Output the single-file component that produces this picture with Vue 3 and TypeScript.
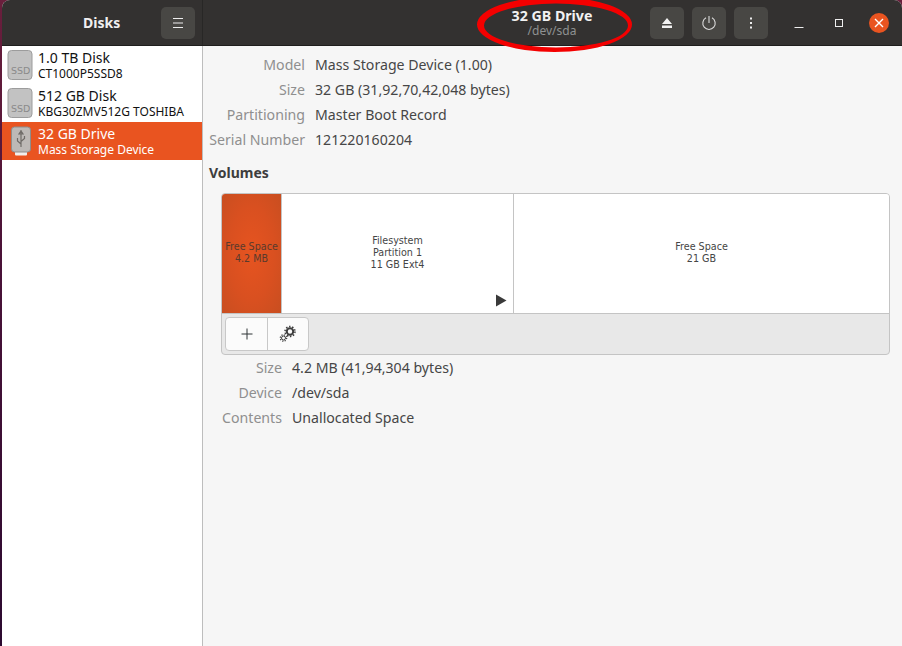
<script setup lang="ts">
const drives = [
  { title: '1.0 TB Disk', sub: 'CT1000P5SSD8', usb: false, active: false },
  { title: '512 GB Disk', sub: 'KBG30ZMV512G TOSHIBA', usb: false, active: false },
  { title: '32 GB Drive', sub: 'Mass Storage Device', usb: true, active: true },
]
const info = [
  ['Model', 'Mass Storage Device (1.00)'],
  ['Size', '32 GB (31,92,70,42,048 bytes)'],
  ['Partitioning', 'Master Boot Record'],
  ['Serial Number', '121220160204'],
]
const volInfo = [
  ['Size', '4.2 MB (41,94,304 bytes)'],
  ['Device', '/dev/sda'],
  ['Contents', 'Unallocated Space'],
]
</script>

<template>
  <div class="desk">
    <div class="win">
      <header class="bar">
        <div class="bar-left">
          <span class="app-title">Disks</span>
          <button class="hb menu-btn">
            <svg width="16" height="16" viewBox="0 0 16 16"><path d="M3 3.500h10M3 8h10M3 12.500h10" stroke="#eee" stroke-width="1" fill="none" /></svg>
          </button>
        </div>
        <div class="bar-right">
          <div class="title-box">
            <div class="t1">32 GB Drive</div>
            <div class="t2">/dev/sda</div>
          </div>
          <div class="actions">
            <button class="hb">
              <svg width="16" height="16" viewBox="0 0 16 16"><path d="M8 3l5 6H3z M3 10.500h10V13H3z" fill="#f2f2f2" /></svg>
            </button>
            <button class="hb">
              <svg width="16" height="16" viewBox="0 0 16 16" fill="none" stroke="#ddd" stroke-width="1.100"><path d="M8 1v7" /><path d="M5 2.800a6.200 6.200 0 1 0 6 0" /></svg>
            </button>
            <button class="hb">
              <svg width="16" height="16" viewBox="0 0 16 16" fill="#eee"><rect x="7" y="2.500" width="2" height="2" /><rect x="7" y="7" width="2" height="2" /><rect x="7" y="11.500" width="2" height="2" /></svg>
            </button>
          </div>
          <div class="wm">
            <svg width="14" height="14" viewBox="0 0 14 14"><path d="M2.500 11.500h9" stroke="#eee" stroke-width="1" fill="none" /></svg>
            <svg width="14" height="14" viewBox="0 0 14 14"><rect x="3.500" y="3.500" width="7" height="7" stroke="#eee" stroke-width="1" fill="none" /></svg>
            <span class="close">
              <svg width="10" height="10" viewBox="0 0 10 10"><path d="M1 1l8 8M9 1l-8 8" stroke="#fff" stroke-width="1.400" fill="none" /></svg>
            </span>
          </div>
        </div>
      </header>
      <div class="body">
        <aside class="side">
          <div v-for="d in drives" :key="d.title" class="drive" :class="{ active: d.active }">
            <svg v-if="!d.usb" class="ico" width="26" height="30" viewBox="0 0 26 30">
              <rect x="1" y="0.500" width="24" height="29" rx="3.500" fill="#c2c2c2" stroke="#9c9c9c" />
            </svg>
            <svg v-else class="ico" width="26" height="30" viewBox="0 0 26 30">
              <rect x="8" y="24" width="12" height="5.500" rx="1" fill="#f3efec" />
              <rect x="4.500" y="1" width="19" height="25" rx="3" fill="#bdb9b6" stroke="#8f8d8b" />
              <path d="M14 4v17M14 5l-2 3h4zM14 18l-3.500-3v-3M14 15.500l3.500-3V10" stroke="#6f6b67" stroke-width="1.200" fill="none" />
            </svg>
            <span v-if="!d.usb" class="ssd">SSD</span>
            <div class="drive-text">
              <div class="d1">{{ d.title }}</div>
              <div class="d2">{{ d.sub }}</div>
            </div>
          </div>
        </aside>
        <main class="main">
          <div class="grid top-grid">
            <template v-for="r in info" :key="r[0]">
              <span class="lab">{{ r[0] }}</span>
              <span class="val">{{ r[1] }}</span>
            </template>
          </div>
          <h2 class="vol-h">Volumes</h2>
          <div class="vol">
            <div class="segs">
              <div class="seg free"><span>Free Space</span><span>4.2 MB</span></div>
              <div class="seg part">
                <span>Filesystem</span><span>Partition 1</span><span>11 GB Ext4</span>
                <svg class="play" width="12" height="13" viewBox="0 0 12 13"><path d="M1 0.500l10.500 6-10.500 6z" fill="#3a3a3a" /></svg>
              </div>
              <div class="seg rest"><span>Free Space</span><span>21 GB</span></div>
            </div>
            <div class="tools">
              <div class="tool-group">
                <button class="tb">
                  <svg width="16" height="16" viewBox="0 0 16 16"><path d="M8 2.500v11M2.500 8h11" stroke="#2e3436" stroke-width="1" fill="none" /></svg>
                </button>
                <button class="tb">
                  <svg width="18" height="18" viewBox="0 0 18 18" fill="none" stroke="#3d3d3d">
                    <circle cx="11" cy="6.500" r="3.200" stroke-width="2" />
                    <circle cx="11" cy="6.500" r="5" stroke-width="1.500" stroke-dasharray="1.500 1.640" />
                    <circle cx="4.500" cy="13" r="2" stroke-width="1" />
                    <circle cx="4.500" cy="13" r="3.200" stroke-width="1.200" stroke-dasharray="1.200 1.310" />
                  </svg>
                </button>
              </div>
            </div>
          </div>
          <div class="grid low-grid">
            <template v-for="r in volInfo" :key="r[0]">
              <span class="lab">{{ r[0] }}</span>
              <span class="val">{{ r[1] }}</span>
            </template>
          </div>
        </main>
      </div>
    </div>
    <svg class="ring" width="170" height="56" viewBox="0 0 170 56">
      <path fill="#f40000" fill-rule="evenodd" d="M7 24.500a77.500 27.500 0 1 0 155 0a77.500 27.500 0 1 0 -155 0zM14 25.500a72 22 0 1 0 144 0a72 22 0 1 0 -144 0z" />
    </svg>
  </div>
</template>

<style>
html, body { margin: 0; padding: 0; background: #300a24; }
</style>

<style scoped>
.desk {
  position: relative;
  width: 902px;
  height: 646px;
  overflow: hidden;
  background: linear-gradient(180deg, #6a1f3c 0%, #4a1238 40%, #2c0a30 100%);
  font-family: "Noto Sans", "Open Sans", sans-serif;
}
.win {
  margin-left: 2px;
  width: 900px;
  height: 646px;
  display: flex;
  flex-direction: column;
  border-radius: 8px 8px 0 0;
  overflow: hidden;
  background: #f6f6f6;
}
.bar {
  flex: none;
  height: 45px;
  display: flex;
  background: #333130;
  border-bottom: 1px solid #1f1e1d;
  color: #f5f5f5;
}
.bar-left {
  width: 200px;
  flex: none;
  display: flex;
  align-items: center;
  border-right: 1px solid #282726;
}
.app-title {
  font-size: 14px;
  font-weight: 700;
  margin-left: 81px;
  color: #f0f0f0;
}
.menu-btn { margin-left: 41px; }
.hb {
  width: 34px;
  height: 32px;
  padding: 0;
  border: 0;
  border-radius: 5px;
  background: #484744;
  display: flex;
  align-items: center;
  justify-content: center;
}
.bar-right {
  flex: 1;
  display: flex;
  align-items: center;
  min-width: 0;
}
.title-box {
  width: 180px;
  margin-left: 259px;
  text-align: center;
  flex: none;
  line-height: 15px;
}
.t1 { font-size: 14.200px; font-weight: 700; color: #f2f2f2; }
.t2 { font-size: 12px; color: #8f9192; }
.actions { display: flex; gap: 8px; margin-left: 8px; }
.wm {
  display: flex;
  align-items: center;
  margin-left: 24px;
  gap: 26px;
}
.close {
  width: 20px;
  height: 20px;
  border-radius: 50%;
  background: #e95420;
  display: flex;
  align-items: center;
  justify-content: center;
  margin-left: -3px;
}
.body {
  flex: 1;
  display: flex;
  min-height: 0;
}
.side {
  width: 200px;
  flex: none;
  background: #fff;
  border-right: 1px solid #bdbdbd;
}
.drive {
  position: relative;
  height: 38px;
  display: flex;
  align-items: center;
  color: #111;
}
.drive.active {
  background: #e95420;
  color: #fff;
}
.ico {
  flex: none;
  margin-left: 5px;
}
.ssd {
  position: absolute;
  left: 9px;
  top: 19px;
  font-size: 9.500px;
  line-height: 12px;
  color: #8a8a8a;
  font-family: "DejaVu Sans", sans-serif;
}
.drive-text { margin-left: 5px; white-space: nowrap; }
.d1 { font-size: 14px; line-height: 17px; }
.d2 { font-size: 12px; line-height: 15px; }
.main {
  flex: 1;
  min-width: 0;
  padding-top: 6px;
}
.grid {
  display: grid;
  grid-auto-rows: 25px;
  column-gap: 10px;
  align-items: center;
  font-size: 14.150px;
}
.top-grid {
  grid-template-columns: 102px auto;
}
.low-grid {
  grid-template-columns: 79px auto;
}
.lab { text-align: right; color: #8f8f8f; white-space: nowrap; }
.val { color: #464646; white-space: nowrap; }
.vol-h {
  margin: 0 0 0 6px;
  padding-top: 11px;
  height: 37px;
  box-sizing: border-box;
  font-size: 14px;
  line-height: 20px;
  font-weight: 700;
  color: #3d3d3d;
}
.vol {
  margin: 4px 12px 0 18px;
  height: 162px;
  box-sizing: border-box;
  border: 1px solid #c4c4c4;
  border-radius: 4px;
  overflow: hidden;
  display: flex;
  flex-direction: column;
  background: #e8e8e8;
}
.segs {
  height: 120px;
  flex: none;
  display: flex;
  background: #fff;
  border-bottom: 1px solid #c4c4c4;
  box-sizing: border-box;
}
.seg {
  position: relative;
  box-sizing: border-box;
  display: flex;
  flex-direction: column;
  align-items: center;
  justify-content: center;
  font-family: "DejaVu Sans", sans-serif;
  font-size: 9.600px;
  line-height: 12px;
  color: #454545;
  border-right: 1px solid #c4c4c4;
  white-space: nowrap;
  padding-bottom: 2px;
}
.seg.free {
  width: 60px;
  background: radial-gradient(ellipse at center, #e65420 0%, #d95020 55%, #c84e20 100%);
  color: #5a3a2c;
}
.seg.part { width: 232px; padding-bottom: 1px; }
.seg.rest { flex: 1; border-right: 0; }
.play {
  position: absolute;
  right: 6px;
  bottom: 6px;
}
.tools {
  flex: 1;
  display: flex;
  align-items: center;
  padding-left: 3px;
}
.tool-group {
  display: flex;
  height: 34px;
  box-sizing: border-box;
  border: 1px solid #c8c8c8;
  border-radius: 4px;
  background: #fbfbfb;
  overflow: hidden;
}
.tb {
  width: 41px;
  padding: 0;
  border: 0;
  background: transparent;
  display: flex;
  align-items: center;
  justify-content: center;
}
.tb + .tb { border-left: 1px solid #c8c8c8; }
.ring {
  position: absolute;
  left: 470px;
  top: 0;
}
</style>
